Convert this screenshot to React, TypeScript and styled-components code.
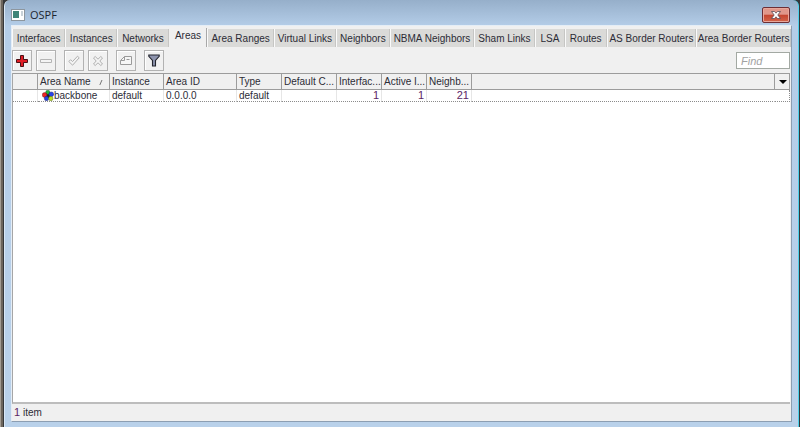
import React from 'react';
import styled, { createGlobalStyle } from 'styled-components';

const Global = createGlobalStyle`
  *, *::before, *::after { box-sizing: border-box; }
  body { margin: 0; background: #000; font: 10px/12px "Liberation Sans", Arial, sans-serif; color: #2c2c36; overflow: hidden; }
  button, input, table { font: inherit; color: inherit; }
`;

const Desktop = styled.div`
  display: flex;
  min-height: 100vh;
  background: linear-gradient(90deg, #a39c92 0 1px, #6b645c 1px 3px, #35373a 3px);
  padding-left: 4px;
`;

const Frame = styled.main`
  flex: 1;
  min-width: 0;
  display: flex;
  flex-direction: column;
  margin-right: 1px;
  padding: 0 6px 5px;
  border-left: 1px solid #d9e7f5;
  border-right: 1px solid #4fd0ea;
  border-top-left-radius: 6px;
  border-top-right-radius: 6px;
  background: linear-gradient(#96afca, #b4cde8 26px, #b9d1ea);
`;

const TitleBar = styled.header`
  display: flex;
  align-items: center;
  height: 25px;
  padding: 4px 2px 0 0;
`;

const Title = styled.h1`
  flex: 1;
  margin: 0 0 0 5px;
  font: 11px/16px "Open Sans", sans-serif;
  color: #1c2630;
`;

const CloseButton = styled.button`
  display: flex;
  align-items: center;
  justify-content: center;
  width: 28px;
  height: 16px;
  padding: 0;
  border: 1px solid #6d2f35;
  border-radius: 2px;
  box-shadow: inset 0 0 0 1px #e8a79b;
  background: linear-gradient(#e0978a 0 45%, #c4452f 50%, #d3644a);
`;

const Client = styled.div`
  flex: 1;
  display: flex;
  flex-direction: column;
  padding: 2px 1px 1px 0;
  border: 1px solid #8c9eb2;
  border-top-color: #e4edf6;
  border-left-color: #e4edf6;
  background: #f0f0f0;
`;

const TabBar = styled.nav`
  display: flex;
  align-items: flex-end;
  height: 19px;
  margin-right: -1px;
`;

const Tab = styled.button<{ $active?: boolean; $basis: number }>`
  flex: ${p => p.$basis} 1 0;
  min-width: 0;
  height: ${p => (p.$active ? 19 : 18)}px;
  padding: ${p => (p.$active ? '0 0 3px' : '1px 0 0')};
  border: 0;
  border-left: 1px solid ${p => (p.$active ? '#f0f0f0' : '#fafafa')};
  border-right: 1px solid ${p => (p.$active ? '#a8a8a8' : '#c6c6c4')};
  background: ${p => (p.$active ? '#f0f0f0' : '#dadad8')};
  white-space: nowrap;
  text-align: center;
`;

const Toolbar = styled.div`
  display: flex;
  align-items: center;
  gap: 4px;
  padding: 3px 0 2px 0;
`;

const ToolButton = styled.button<{ $spaced?: boolean }>`
  display: flex;
  align-items: center;
  justify-content: center;
  width: 20px;
  height: 21px;
  padding: 0;
  margin-left: ${p => (p.$spaced ? 4 : 0)}px;
  border: 1px solid #b2b2b2;
  background: #f1f1f1;
  box-shadow: inset 1px 1px #fff;
`;

const Find = styled.input`
  width: 54px;
  height: 17px;
  margin-left: auto;
  padding: 0 4px;
  border: 1px solid #a3a9a3;
  border-radius: 0;
  background: #fff;
  font-style: italic;
  font-size: 11px;
  &::placeholder { color: #a2a2a2; opacity: 1; }
`;

const List = styled.section`
  flex: 1;
  border-left: 1px solid #a6a6a6;
  border-bottom: 2px solid #bdbdbd;
  background: #fff;
`;

const Table = styled.table`
  width: 100%;
  table-layout: fixed;
  border-collapse: separate;
  border-spacing: 0;
`;

const Head = styled.th`
  height: 17px;
  padding: 1px 1px 0 2px;
  border: solid #9c9c9c;
  border-width: 1px 1px 1px 0;
  background: #f0f0f0;
  text-align: left;
  font-weight: 400;
  white-space: nowrap;
`;

const HeadLabel = styled.div`
  display: flex;
  justify-content: space-between;
  align-items: center;
  padding-right: 5px;
`;

const MenuButton = styled.button`
  display: flex;
  align-items: center;
  justify-content: center;
  width: 100%;
  height: 14px;
  padding: 0;
  border: 0;
  background: transparent;
`;

const Cell = styled.td<{ $numeric?: boolean; $open?: boolean }>`
  height: 12px;
  padding: 0 2px;
  line-height: 11px;
  border-bottom: 1px dotted #8b8b8b;
  border-right: 1px solid ${p => (p.$open ? 'transparent' : '#e6e6e6')};
  text-align: ${p => (p.$numeric ? 'right' : 'left')};
  font-size: ${p => (p.$numeric ? 11 : 10)}px;
  color: ${p => (p.$numeric ? '#5c2565' : 'inherit')};
  white-space: nowrap;
  &:last-child { border-right: 1px dotted #8b8b8b; }
`;

const NameLabel = styled.div`
  display: flex;
  align-items: center;
  height: 11px;
  padding-left: 2px;
`;

const Status = styled.footer`
  height: 16px;
  padding: 2px;
`;

const Count = styled.span`
  color: #5c2565;
  font-size: 11px;
`;

const tabs: [string, number][] = [
  ['Interfaces', 53], ['Instances', 52], ['Networks', 51], ['Areas', 38], ['Area Ranges', 67],
  ['Virtual Links', 62], ['Neighbors', 54], ['NBMA Neighbors', 85], ['Sham Links', 61],
  ['LSA', 29], ['Routes', 41], ['AS Border Routers', 91], ['Area Border Routers', 96],
];

const columns = [
  { label: '', width: 25 },
  { label: 'Area Name', width: 72, sorted: true },
  { label: 'Instance', width: 54 },
  { label: 'Area ID', width: 73 },
  { label: 'Type', width: 45 },
  { label: 'Default C...', width: 55 },
  { label: 'Interfac...', width: 45 },
  { label: 'Active I...', width: 45 },
  { label: 'Neighb...', width: 45 },
];

const WindowIcon = () => (
  <svg width="14" height="12" viewBox="0 0 14 12" aria-hidden="true">
    <rect x=".5" y=".5" width="13" height="11" fill="#fff" stroke="#8d969e" />
    <rect x="2" y="2" width="6" height="7" fill="#3f8478" />
    <rect x="10" y="2" width="2" height="5" fill="#c9d2d8" />
  </svg>
);

const CloseIcon = () => (
  <svg width="10" height="8" viewBox="0 0 10 8" aria-hidden="true">
    <path d="M.5.5H3.5L5 2.2 6.500.5H9.500L6.800 4 9.500 7.500H6.500L5 5.800 3.500 7.500H.5L3.200 4Z" fill="#fff" stroke="#5b4c56" strokeWidth=".8" />
  </svg>
);

const PlusIcon = () => (
  <svg width="12" height="12" viewBox="0 0 12 12" aria-hidden="true">
    <path d="M4.500.5h3v4h4v3h-4v4h-3v-4h-4v-3h4z" fill="#e01c24" stroke="#4c1015" />
  </svg>
);

const MinusIcon = () => (
  <svg width="12" height="12" viewBox="0 0 12 12" aria-hidden="true">
    <path d="M.5 4.500h11v3H.5z" fill="#f4f4f4" stroke="#b4b4b4" />
  </svg>
);

const CheckIcon = () => (
  <svg width="12" height="12" viewBox="0 0 12 12" aria-hidden="true">
    <path d="M.8 6.500 2.600 4.700 4.500 6.600 9.500 1.200 11.200 2.800 4.600 10.200Z" fill="#f4f4f4" stroke="#b0b0b0" />
  </svg>
);

const CrossIcon = () => (
  <svg width="12" height="12" viewBox="0 0 12 12" aria-hidden="true">
    <path d="M1.500 3 3.200 1.500 6 4.200 8.800 1.500 10.500 3 7.800 6 10.500 9 8.800 10.500 6 7.800 3.200 10.500 1.500 9 4.200 6Z" fill="#f4f4f4" stroke="#b0b0b0" />
  </svg>
);

const NoteIcon = () => (
  <svg width="12" height="12" viewBox="0 0 12 12" aria-hidden="true">
    <path d="M4.500 1.500h7v8h-11v-4zM4.500 1.500v4h-4M6.500 4.500h3" fill="#f6f6f6" stroke="#9a9a9a" />
  </svg>
);

const FilterIcon = () => (
  <svg width="12" height="13" viewBox="0 0 12 13" aria-hidden="true">
    <path d="M.8 1h10.400v1.300L7.500 6.500v5.500h-3V6.500L.8 2.300Z" fill="#8d93ad" stroke="#23252e" strokeWidth="1.100" />
  </svg>
);

const AreaIcon = () => (
  <svg width="12" height="11" viewBox="0 0 12 11" aria-hidden="true">
    <circle cx="6" cy="5.500" r="3" fill="#222" />
    <circle cx="5.800" cy="2.300" r="2.100" fill="#1db53b" stroke="#163a22" strokeWidth=".4" />
    <circle cx="2.600" cy="5" r="2.400" fill="#ee2424" stroke="#4a1515" strokeWidth=".4" />
    <circle cx="9.300" cy="4.300" r="2.400" fill="#2743e8" stroke="#151c55" strokeWidth=".4" />
    <circle cx="4.500" cy="8.500" r="2.200" fill="#2440e0" stroke="#151c55" strokeWidth=".4" />
    <circle cx="8.800" cy="8.500" r="2.200" fill="#b8e01e" stroke="#4a5510" strokeWidth=".4" />
  </svg>
);

const SortIcon = () => (
  <svg width="4" height="8" viewBox="0 0 4 8" aria-hidden="true">
    <path d="M.8 7 3 2" stroke="#777" fill="none" />
  </svg>
);

const ArrowIcon = () => (
  <svg width="8" height="4" viewBox="0 0 8 4" aria-hidden="true">
    <path d="M0 0h8L4 4z" fill="#000" />
  </svg>
);

export default function App() {
  return (
    <>
      <Global />
      <Desktop>
        <Frame>
          <TitleBar>
            <WindowIcon />
            <Title>OSPF</Title>
            <CloseButton aria-label="Close"><CloseIcon /></CloseButton>
          </TitleBar>
          <Client>
            <TabBar role="tablist">
              {tabs.map(([name, basis]) => (
                <Tab key={name} role="tab" aria-selected={name === 'Areas'} $active={name === 'Areas'} $basis={basis}>
                  {name}
                </Tab>
              ))}
            </TabBar>
            <Toolbar>
              <ToolButton aria-label="Add"><PlusIcon /></ToolButton>
              <ToolButton aria-label="Remove"><MinusIcon /></ToolButton>
              <ToolButton aria-label="Enable" $spaced><CheckIcon /></ToolButton>
              <ToolButton aria-label="Disable"><CrossIcon /></ToolButton>
              <ToolButton aria-label="Comment" $spaced><NoteIcon /></ToolButton>
              <ToolButton aria-label="Filter" $spaced><FilterIcon /></ToolButton>
              <Find placeholder="Find" aria-label="Find" />
            </Toolbar>
            <List>
              <Table>
                <colgroup>
                  {columns.map(c => <col key={c.label} width={c.width} />)}
                  <col />
                  <col width={15} />
                </colgroup>
                <thead>
                  <tr>
                    {columns.map(c => (
                      <Head key={c.label}>
                        {c.sorted ? <HeadLabel>{c.label}<SortIcon /></HeadLabel> : c.label}
                      </Head>
                    ))}
                    <Head />
                    <Head><MenuButton aria-label="Columns"><ArrowIcon /></MenuButton></Head>
                  </tr>
                </thead>
                <tbody>
                  <tr>
                    <Cell />
                    <Cell><NameLabel><AreaIcon />backbone</NameLabel></Cell>
                    <Cell>default</Cell>
                    <Cell>0.0.0.0</Cell>
                    <Cell>default</Cell>
                    <Cell />
                    <Cell $numeric>1</Cell>
                    <Cell $numeric>1</Cell>
                    <Cell $numeric>21</Cell>
                    <Cell $open />
                    <Cell />
                  </tr>
                </tbody>
              </Table>
            </List>
            <Status><Count>1</Count> item</Status>
          </Client>
        </Frame>
      </Desktop>
    </>
  );
}
